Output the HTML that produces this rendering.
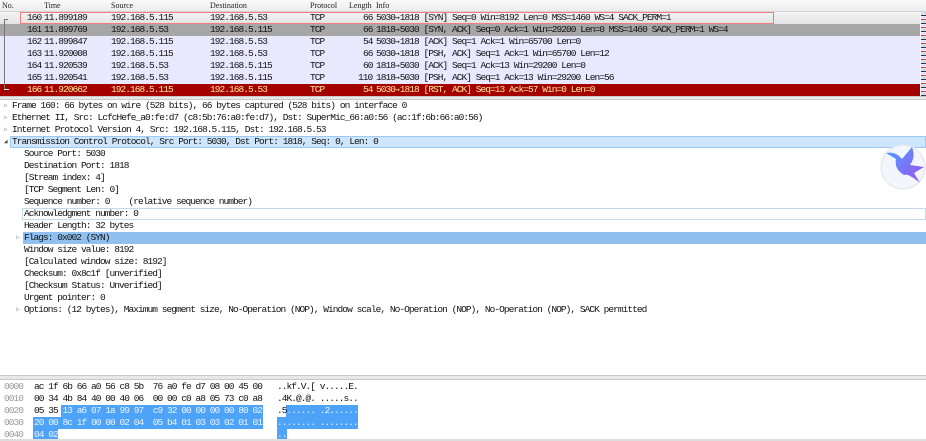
<!DOCTYPE html>
<html><head><meta charset="utf-8"><style>
*{margin:0;padding:0;box-sizing:border-box}
body{width:926px;height:441px;overflow:hidden;background:#fff;font-family:"Liberation Mono",monospace;font-size:9.5px;letter-spacing:-0.95px;color:#111;position:relative}
.a{position:absolute;white-space:pre;line-height:12px}
.row{position:absolute;left:0;width:920px;height:12px}
.hdr{position:absolute;top:0;left:0;width:926px;height:12px;background:linear-gradient(#fafafa,#ececec);border-bottom:1px solid #d5d5d5}
.hdr span{position:absolute;top:0;font-family:"Liberation Serif",serif;font-size:8px;letter-spacing:0;line-height:11px;color:#222}
.sep{position:absolute;left:0;width:926px;background:#e8e8e8;border-top:1px solid #c8c8c8;border-bottom:1px solid #c8c8c8}
.tri{position:absolute;font-size:6px;color:#888;line-height:12px;letter-spacing:0}
.ar{display:inline-block;width:4.75px;letter-spacing:0;font-family:"DejaVu Sans Mono",monospace;font-size:8px;overflow:hidden;vertical-align:top}
</style></head><body>
<div class="hdr"><span style="left:2px">No.</span><span style="left:44px">Time</span><span style="left:111px">Source</span><span style="left:210px">Destination</span><span style="left:310px">Protocol</span><span style="left:349px">Length</span><span style="left:376px">Info</span></div>

<div class="row" style="top:12px;background:linear-gradient(#f4f4f4,#e2e2e2)"></div>
<div style="position:absolute;top:12px;left:20px;width:754px;height:12px;border:1px solid #f08080"></div>
<div class="row" style="top:24px;background:#a6a6a6"></div>
<div class="row" style="top:36px;height:48px;background:#e8e8ff"></div>
<div class="row" style="top:84px;background:#a40000;color:#ffef9a"></div>
<div style="position:absolute;left:4px;top:19px;width:1px;height:70px;background:#777"></div>
<div style="position:absolute;left:4px;top:19px;width:4px;height:1px;background:#777"></div>
<div style="position:absolute;left:4px;top:89px;width:5px;height:1px;background:#eee"></div>

<div id="pl"></div>
<script>
var A='<span class="ar">→</span>';
var rows=[
["160","11.899189","192.168.5.115","192.168.5.53","66","5030"+A+"1818 [SYN] Seq=0 Win=8192 Len=0 MSS=1460 WS=4 SACK_PERM=1",""],
["161","11.899769","192.168.5.53","192.168.5.115","66","1818"+A+"5030 [SYN, ACK] Seq=0 Ack=1 Win=29200 Len=0 MSS=1460 SACK_PERM=1 WS=4",""],
["162","11.899847","192.168.5.115","192.168.5.53","54","5030"+A+"1818 [ACK] Seq=1 Ack=1 Win=65700 Len=0",""],
["163","11.920008","192.168.5.115","192.168.5.53","66","5030"+A+"1818 [PSH, ACK] Seq=1 Ack=1 Win=65700 Len=12",""],
["164","11.920539","192.168.5.53","192.168.5.115","60","1818"+A+"5030 [ACK] Seq=1 Ack=13 Win=29200 Len=0",""],
["165","11.920541","192.168.5.53","192.168.5.115","110","1818"+A+"5030 [PSH, ACK] Seq=1 Ack=13 Win=29200 Len=56",""],
["166","11.920662","192.168.5.115","192.168.5.53","54","5030"+A+"1818 [RST, ACK] Seq=13 Ack=57 Win=0 Len=0","#ffef9a"]];
var h="";
rows.forEach(function(r,i){var t=12+i*12;var col=r[6]?'color:'+r[6]+';':'';
h+='<div class="a" style="top:'+t+'px;left:27px;'+col+'">'+r[0]+'</div>';
h+='<div class="a" style="top:'+t+'px;left:44px;'+col+'">'+r[1]+'</div>';
h+='<div class="a" style="top:'+t+'px;left:111px;'+col+'">'+r[2]+'</div>';
h+='<div class="a" style="top:'+t+'px;left:210px;'+col+'">'+r[3]+'</div>';
h+='<div class="a" style="top:'+t+'px;left:310px;'+col+'">TCP</div>';
h+='<div class="a" style="top:'+t+'px;left:'+(r[4].length==3?358:363)+'px;'+col+'">'+r[4]+'</div>';
h+='<div class="a" style="top:'+t+'px;left:376px;'+col+'">'+r[5]+'</div>';});
document.getElementById('pl').innerHTML=h;
</script>
<div style="position:absolute;left:921px;top:12px;width:5px;height:84px;background:repeating-linear-gradient(#cfe0f0 0 3px,#333 3px 4px,#e8e8ff 4px 7px,#c44 7px 8px)"></div>

<div class="sep" style="top:96px;height:4px"></div>

<div style="position:absolute;top:136px;left:10px;width:916px;height:12px;background:#cde6fd;border:1px solid #9cc8f2"></div>
<div style="position:absolute;top:208px;left:22px;width:904px;height:12px;border:1px solid #c8d8ec"></div>
<div style="position:absolute;top:232px;left:23px;width:903px;height:12px;background:#90c0f0"></div>

<div class="tri" style="top:100px;left:4px">▷</div>
<div class="tri" style="top:112px;left:4px">▷</div>
<div class="tri" style="top:124px;left:4px">▷</div>
<div class="tri" style="top:136px;left:4px;color:#444">◢</div>
<div class="tri" style="top:232px;left:16px">▷</div>
<div class="tri" style="top:304px;left:16px">▷</div>

<div class="a" style="top:100px;left:12px">Frame 160: 66 bytes on wire (528 bits), 66 bytes captured (528 bits) on interface 0</div>
<div class="a" style="top:112px;left:12px">Ethernet II, Src: LcfcHefe_a0:fe:d7 (c8:5b:76:a0:fe:d7), Dst: SuperMic_66:a0:56 (ac:1f:6b:66:a0:56)</div>
<div class="a" style="top:124px;left:12px">Internet Protocol Version 4, Src: 192.168.5.115, Dst: 192.168.5.53</div>
<div class="a" style="top:136px;left:12px">Transmission Control Protocol, Src Port: 5030, Dst Port: 1818, Seq: 0, Len: 0</div>
<div class="a" style="top:148px;left:24px">Source Port: 5030
Destination Port: 1818
[Stream index: 4]
[TCP Segment Len: 0]
Sequence number: 0    (relative sequence number)
Acknowledgment number: 0
Header Length: 32 bytes
Flags: 0x002 (SYN)
Window size value: 8192
[Calculated window size: 8192]
Checksum: 0x8c1f [unverified]
[Checksum Status: Unverified]
Urgent pointer: 0
Options: (12 bytes), Maximum segment size, No-Operation (NOP), Window scale, No-Operation (NOP), No-Operation (NOP), SACK permitted</div>

<svg style="position:absolute;left:880px;top:143px" width="46" height="48" viewBox="0 0 46 48">
<defs><linearGradient id="g" x1="0" y1="0" x2="1" y2="1"><stop offset="0" stop-color="#4aa0ff"/><stop offset="1" stop-color="#a050f0"/></linearGradient></defs>
<circle cx="23" cy="24" r="22" fill="#f3f5fc" stroke="#e2e4ec"/>
<path d="M6 10 Q16 8 22 16 L32 4 Q36 14 30 22 L44 24 L34 30 L40 40 Q28 30 24 32 Q14 26 16 16 Z" fill="url(#g)"/>
</svg>

<div class="sep" style="top:375px;height:5px"></div>
<div class="a" style="top:381px;left:4px;color:#999">0000
0010
0020
0030
0040</div>
<div style="position:absolute;top:405px;left:61px;width:202px;height:12px;background:#4da3f7"></div>
<div style="position:absolute;top:417px;left:33px;width:230px;height:12px;background:#4da3f7"></div>
<div style="position:absolute;top:429px;left:33px;width:25px;height:12px;background:#4da3f7"></div>
<div style="position:absolute;top:405px;left:286px;width:72px;height:12px;background:#4da3f7"></div>
<div style="position:absolute;top:417px;left:277px;width:81px;height:12px;background:#4da3f7"></div>
<div style="position:absolute;top:429px;left:277px;width:10px;height:12px;background:#4da3f7"></div>
<div class="a" style="top:381px;left:34px">ac 1f 6b 66 a0 56 c8 5b  76 a0 fe d7 08 00 45 00
00 34 4b 84 40 00 40 06  00 00 c0 a8 05 73 c0 a8
05 35 <span style="color:#eaf4ff">13 a6 07 1a 99 97  c9 32 00 00 00 00 80 02</span>
<span style="color:#eaf4ff">20 00 8c 1f 00 00 02 04  05 b4 01 03 03 02 01 01</span>
<span style="color:#eaf4ff">04 02</span></div>
<div class="a" style="top:381px;left:277px">..kf.V.[ v.....E.
.4K.@.@. .....s..
.5<span style="color:#eaf4ff">...... .2......</span>
<span style="color:#eaf4ff">........ ........</span>
<span style="color:#eaf4ff">..</span></div>
<div style="position:absolute;top:439px;left:0;width:926px;height:2px;background:#ddd"></div>
</body></html>
